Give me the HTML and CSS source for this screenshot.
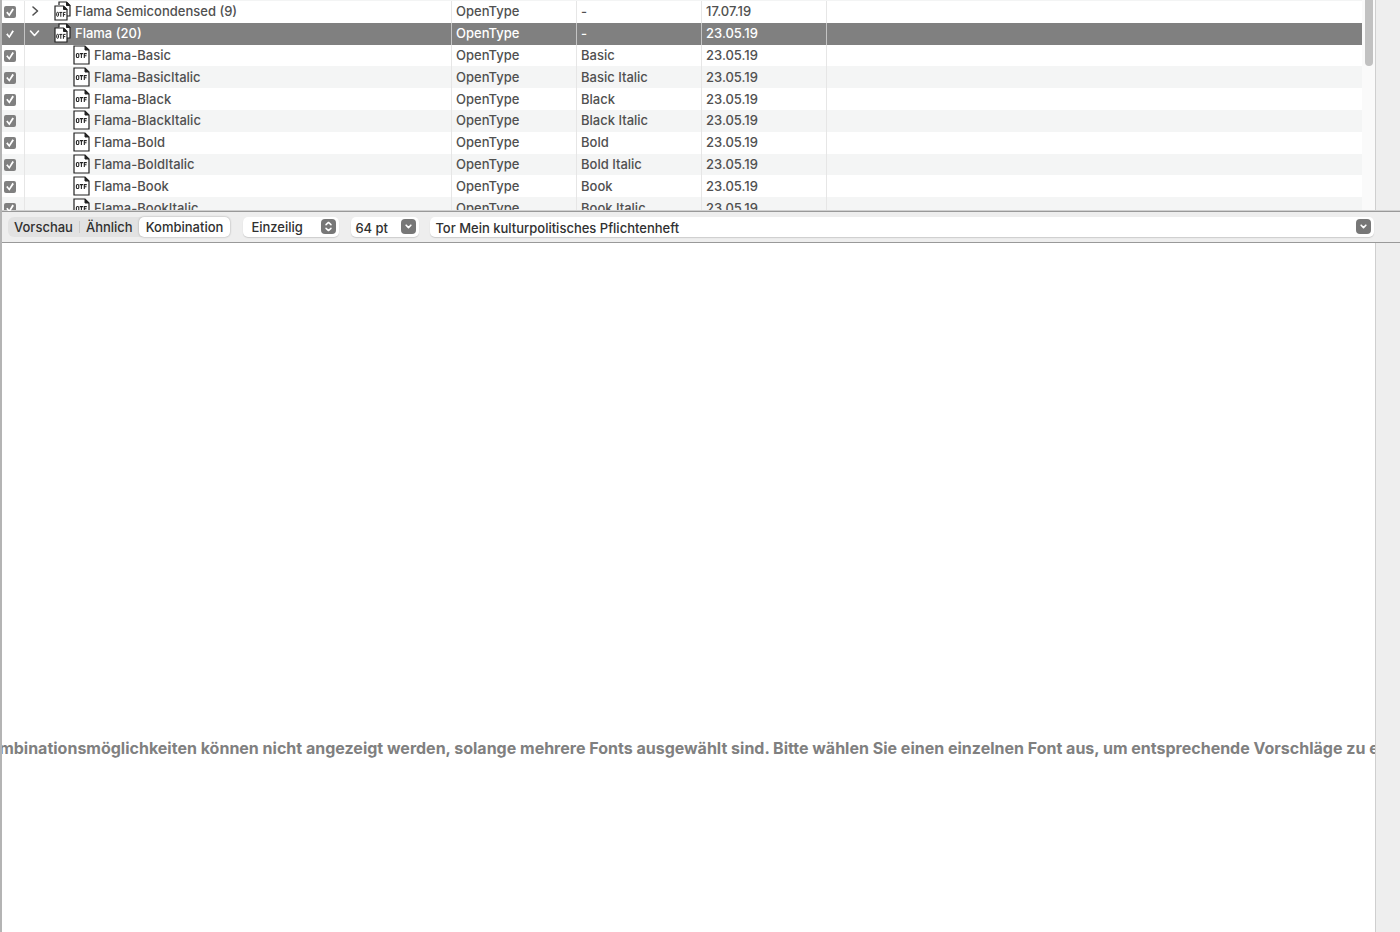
FILE: index.html
```html
<!DOCTYPE html>
<html lang="de">
<head>
<meta charset="utf-8">
<title>Schriften</title>
<link rel="stylesheet" href="styles.css">
</head>
<body>
<svg class="defs" aria-hidden="true">
  <symbol id="otf" viewBox="0 0 17 20">
    <path d="M1 1H12L16 5V19H1Z" fill="#fff" stroke="#222" stroke-width="1.2"/>
    <path d="M12 1V5H16Z" fill="#222" stroke="#222"/>
    <g fill="none" stroke="#222" stroke-width="1.1"><rect x="3.4" y="8.5" width="2.4" height="4" rx="1.1"/><path d="M6.7 8.6H10.1M8.4 8.6V13M11.3 13V8.6H13.8M11.3 10.8H13.5"/></g>
  </symbol>
  <symbol id="otfs" viewBox="0 0 17 20">
    <path d="M5 4V1H12.5L16 4.5V15H13" fill="#fff" stroke="#222" stroke-width="1.2"/>
    <path d="M12.5 1V4.5H16Z" fill="#222" stroke="#222"/>
    <path d="M1 5H9.5L13 8.5V19H1Z" fill="#fff" stroke="#222" stroke-width="1.2"/>
    <path d="M9.5 5V8.5H13Z" fill="#222" stroke="#222"/>
    <g fill="none" stroke="#222" stroke-width="1"><rect x="2.7" y="11.3" width="1.8" height="4" rx=".9"/><path d="M5.3 11.4H8.3M6.8 11.4V15.8M9.4 15.8V11.4H11.6M9.4 13.6H11.3"/></g>
  </symbol>
  <symbol id="down" viewBox="0 0 14 14"><path d="M4.8 5.8L7 8L9.2 5.8" fill="none" stroke="#fff" stroke-width="1.5" stroke-linecap="round" stroke-linejoin="round"/></symbol>
</svg>
<main class="window">
  <section class="fonts">
    <div class="list">
      <table class="table">
        <colgroup><col class="c-check"><col class="c-name"><col class="c-type"><col class="c-type"><col class="c-type"><col></colgroup>
        <tbody>
        <tr><td><input type="checkbox" checked aria-label="Flama Semicondensed"></td><td><div class="family"><button class="toggle" aria-label="Aufklappen"><svg viewBox="0 0 12 12"><path d="M4 2L8.5 6L4 10"/></svg></button><svg class="doc"><use href="#otfs"/></svg>Flama Semicondensed (9)</div></td><td>OpenType</td><td>-</td><td>17.07.19</td><td></td></tr>
        <tr class="selected"><td><input type="checkbox" checked aria-label="Flama"></td><td><div class="family"><button class="toggle" aria-label="Zuklappen"><svg viewBox="0 0 12 12"><path d="M1.5 4L5.5 8.5L9.5 4"/></svg></button><svg class="doc"><use href="#otfs"/></svg>Flama (20)</div></td><td>OpenType</td><td>-</td><td>23.05.19</td><td></td></tr>
        <tr><td><input type="checkbox" checked aria-label="Flama-Basic"></td><td><div class="face"><svg class="doc"><use href="#otf"/></svg>Flama-Basic</div></td><td>OpenType</td><td>Basic</td><td>23.05.19</td><td></td></tr>
        <tr><td><input type="checkbox" checked aria-label="Flama-BasicItalic"></td><td><div class="face"><svg class="doc"><use href="#otf"/></svg>Flama-BasicItalic</div></td><td>OpenType</td><td>Basic Italic</td><td>23.05.19</td><td></td></tr>
        <tr><td><input type="checkbox" checked aria-label="Flama-Black"></td><td><div class="face"><svg class="doc"><use href="#otf"/></svg>Flama-Black</div></td><td>OpenType</td><td>Black</td><td>23.05.19</td><td></td></tr>
        <tr><td><input type="checkbox" checked aria-label="Flama-BlackItalic"></td><td><div class="face"><svg class="doc"><use href="#otf"/></svg>Flama-BlackItalic</div></td><td>OpenType</td><td>Black Italic</td><td>23.05.19</td><td></td></tr>
        <tr><td><input type="checkbox" checked aria-label="Flama-Bold"></td><td><div class="face"><svg class="doc"><use href="#otf"/></svg>Flama-Bold</div></td><td>OpenType</td><td>Bold</td><td>23.05.19</td><td></td></tr>
        <tr><td><input type="checkbox" checked aria-label="Flama-BoldItalic"></td><td><div class="face"><svg class="doc"><use href="#otf"/></svg>Flama-BoldItalic</div></td><td>OpenType</td><td>Bold Italic</td><td>23.05.19</td><td></td></tr>
        <tr><td><input type="checkbox" checked aria-label="Flama-Book"></td><td><div class="face"><svg class="doc"><use href="#otf"/></svg>Flama-Book</div></td><td>OpenType</td><td>Book</td><td>23.05.19</td><td></td></tr>
        <tr><td><input type="checkbox" checked aria-label="Flama-BookItalic"></td><td><div class="face"><svg class="doc"><use href="#otf"/></svg>Flama-BookItalic</div></td><td>OpenType</td><td>Book Italic</td><td>23.05.19</td><td></td></tr>
        </tbody>
      </table>
    </div>
    <div class="track"><div class="thumb"></div></div>
    <div class="gutter"></div>
  </section>
  <section class="toolbar">
    <div class="segments">
      <button>Vorschau</button><span class="divider"></span><button>Ähnlich</button><button class="active">Kombination</button>
    </div>
    <div class="field mode">
      <select aria-label="Darstellung"><option>Einzeilig</option></select>
      <svg class="knob" viewBox="0 0 14 14"><path d="M4.7 5.3L7 3.2L9.3 5.3M4.7 8.7L7 10.8L9.3 8.7" fill="none" stroke="#fff" stroke-width="1.4" stroke-linecap="round" stroke-linejoin="round"/></svg>
    </div>
    <div class="field size">
      <input type="text" value="64 pt" aria-label="Schriftgröße">
      <button class="knob" aria-label="Größe wählen"><svg viewBox="0 0 14 14"><use href="#down"/></svg></button>
    </div>
    <div class="field sample">
      <input type="text" value="Tor Mein kulturpolitisches Pflichtenheft" aria-label="Mustertext">
      <button class="knob" aria-label="Mustertext wählen"><svg viewBox="0 0 14 14"><use href="#down"/></svg></button>
    </div>
  </section>
  <section class="preview">
    <div class="canvas"><p class="message">Die Kombinationsmöglichkeiten können nicht angezeigt werden, solange mehrere Fonts ausgewählt sind. Bitte wählen Sie einen einzelnen Font aus, um entsprechende Vorschläge zu erhalten.</p></div>
    <div class="gutter"></div>
  </section>
</main>
</body>
</html>
```
FILE: styles.css
```css
* { box-sizing: border-box; }
body {
  margin: 0;
  font-family: Inter, "Liberation Sans", sans-serif;
  font-size: 13px;
  font-weight: 500;
  color: #505050;
  background: #fff;
}
button, input, select { font: inherit; color: inherit; margin: 0; padding: 0; border: 0; background: none; }
.defs { display: none; }
.window {
  display: flex;
  flex-direction: column;
  height: 100vh;
  border-left: 2px solid #b4b4b4;
  overflow: hidden;
}
.fonts { display: flex; flex: none; height: 211px; overflow: hidden; }
.list { flex: 1; min-width: 0; border-top: 1px solid #f3f4f4; }
.table { width: 100%; height: 218px; table-layout: fixed; border-collapse: separate; border-spacing: 0; line-height: 16px; }
.c-check { width: 23px; }
.c-name { width: 427px; }
.c-type { width: 125px; }
.table td { padding: 0 0 1px 4px; border-right: 1px solid #e6e6e6; vertical-align: middle; white-space: nowrap; }
.table td:last-child { border-right: 0; }
.table td:first-child { padding: 1px 0 0 2px; line-height: 0; }
.table td:nth-child(2) { padding: 0 0 1px; }
.table tr:nth-child(even) td { background: #f4f5f5; }
.table tr.selected td { background: #808080; color: #fff; border-right-color: #c4c4c4; }
.table input {
  appearance: none;
  display: block;
  width: 12px;
  height: 12px;
  border-radius: 2px;
  background: #808080;
}
.table input::before {
  content: "";
  display: block;
  width: 12px;
  height: 12px;
  background: #fff;
  clip-path: polygon(18% 52%, 30% 43%, 43% 62%, 70% 17%, 83% 26%, 45% 84%);
}
.family, .face { display: flex; align-items: center; height: 20px; }
.family { padding-left: 4px; }
.face { padding-left: 48px; }
.doc { width: 17px; height: 20px; margin-right: 4px; flex: none; }
.family .doc { margin-left: 13px; }
.toggle { width: 12px; height: 12px; line-height: 0; }
.toggle svg { width: 12px; height: 12px; fill: none; stroke: currentColor; stroke-width: 1.6; stroke-linecap: round; stroke-linejoin: round; }
.track { width: 13px; padding: 0 2px; background: #fafafa; }
.thumb { width: 8px; height: 66px; margin-left: 1px; border-radius: 0 0 4px 4px; background: #c1c1c1; }
.gutter { width: 25px; flex: none; background: #eee; border-left: 1px solid #cfcfcf; }
.toolbar {
  display: flex;
  align-items: center;
  flex: none;
  height: 32px;
  padding: 0 26px 1px 6px;
  background: #eee;
  border-top: 1px solid #999;
  border-bottom: 1px solid #999;
  box-shadow: 0 -1px #d0d0d0;
  color: #303030;
}
.segments { display: flex; align-items: center; height: 20px; border-radius: 6px; background: #e2e2e2; margin-right: 13px; }
.segments button { height: 20px; padding: 0 6px; line-height: 20px; }
.segments .active { padding: 0 7px; border-radius: 5px; background: #fff; box-shadow: 0 0 2px #999; }
.divider { width: 1px; height: 12px; background: #cbcbcb; }
.field { display: flex; align-items: center; height: 20px; padding: 0 3px 0 8px; border-radius: 5px; background: #fff; box-shadow: 0 1px 1px #ccc; }
.field input, .field select { flex: 1; min-width: 0; height: 20px; appearance: none; outline: 0; }
.mode { width: 96px; margin-right: 12px; }
.size { width: 68px; margin-right: 11px; padding-left: 4px; }
.sample { flex: 1; padding-left: 5px; }
.size input, .sample input { padding-top: 2px; }
.knob { width: 15px; height: 15px; flex: none; border-radius: 4px; background: #777; line-height: 0; }
.knob svg { width: 15px; height: 15px; }
.preview { display: flex; flex: 1; min-height: 0; }
.canvas { flex: 1; min-width: 0; display: flex; justify-content: center; align-items: center; overflow: hidden; padding: 320px 0 0 12px; }
.message { flex: none; margin: 0; white-space: nowrap; font-size: 16px; line-height: 20px; font-weight: 700; color: #808080; }
```
